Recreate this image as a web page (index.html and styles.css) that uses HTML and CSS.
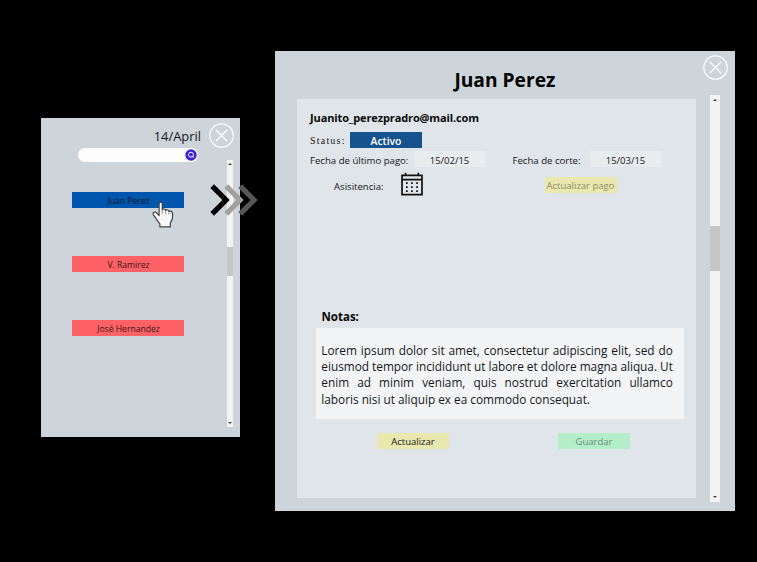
FILE: index.html
```html
<!DOCTYPE html>
<html lang="es">
<head>
<meta charset="utf-8">
<title>Juan Perez</title>
<link rel="stylesheet" href="styles.css">
</head>
<body>
<main class="stage">
  <section class="list-panel">
    <div class="list-main">
      <h2 class="date">14/April</h2>
      <div class="search">
        <svg class="search-icon" viewBox="0 0 12 12"><circle cx="6" cy="6" r="5.7" fill="#3b20d6"/><circle cx="6" cy="5.7" r="2.5" fill="none" stroke="#fff" stroke-width="1"/><path d="M7 6.8 9 8.8" stroke="#fff" stroke-width="1"/></svg>
      </div>
      <div class="people">
        <button class="person selected">Juan Perez</button>
        <button class="person">V. Ramirez</button>
        <button class="person">José Hernandez</button>
      </div>
    </div>
    <div class="list-side">
      <svg class="close" viewBox="0 0 25 25"><circle cx="12.5" cy="12.5" r="11.7"/><path d="m6.8 6.8 11.4 11.4m0-11.4L6.8 18.2"/></svg>
      <div class="scrollbar small"><i class="up"></i><i class="thumb"></i><i class="down"></i></div>
    </div>
    <svg class="pointer" viewBox="0 0 22 27"><path d="M7.1 13.4V3.1Q7.1 1.2 8.7 1.2T10.3 3.1V8.8Q10.7 7.8 12.1 8T13.6 9.4Q14.2 8.6 15.6 9T16.9 10.4Q18 9.7 19.3 10.4T20.6 12.7C21 17 20.4 19.4 18.3 22V25.9H7.9V23.1L4.4 18.2 1.3 13.6Q.6 12 2 11.3 3.2 10.7 4.6 11.8L7.1 14.6Z" fill="#f8f8f8" stroke="#444" stroke-width="1.2" stroke-linejoin="round"/><path d="M10.3 8.8v4M13.6 9.4v3.5M16.9 10.4v3" fill="none" stroke="#777" stroke-width=".8"/></svg>
    <svg class="arrows" viewBox="0 0 48 32"><path d="M30.2 2.2 44 16 30.2 29.8" stroke="#555"/><path d="M16.2 2.2 30 16 16.2 29.8" stroke="#a0a0a0"/><path d="M2.2 2.2 16 16 2.2 29.8" stroke="#000"/></svg>
  </section>

  <section class="detail-panel">
    <div class="detail-main">
      <h1 class="name">Juan Perez</h1>
      <div class="card">
        <p class="email">Juanito_perezpradro@mail.com</p>
        <div class="row status-row"><span class="status-label">Status:</span><span class="badge active">Activo</span></div>
        <div class="row date-row">
          <span class="label paid">Fecha de último pago:</span><span class="badge value">15/02/15</span>
          <span class="label due">Fecha de corte:</span><span class="badge value">15/03/15</span>
        </div>
        <div class="row attend-row">
          <span class="label attend">Asisitencia:</span>
          <svg class="calendar" viewBox="0 0 22 24"><path d="M1 3.4H21V22.6H1ZM1 7.7H21" fill="none" stroke="#111" stroke-width="1.7"/><path d="M4.6.8v3M17.4.8v3" stroke="#111" stroke-width="1.6"/><path d="M5 11.2H17.5M5 15.2H17.5M5 19.2H17.5" stroke="#111" stroke-width="1.7" stroke-dasharray="1.7 3.4"/></svg>
          <button class="badge yellow faded">Actualizar pago</button>
        </div>
        <h3 class="notes-title">Notas:</h3>
        <div class="notes">
          <div>Lorem ipsum dolor sit amet, consectetur adipiscing elit, sed do</div>
          <div>eiusmod tempor incididunt ut labore et dolore magna aliqua. Ut</div>
          <div>enim ad minim veniam, quis nostrud exercitation ullamco</div>
          <div class="last">laboris nisi ut aliquip ex ea commodo consequat.</div>
        </div>
        <div class="actions"><button class="badge yellow">Actualizar</button><button class="badge green">Guardar</button></div>
      </div>
    </div>
    <div class="detail-side">
      <svg class="close" viewBox="0 0 25 25"><circle cx="12.5" cy="12.5" r="11.7"/><path d="m6.8 6.8 11.4 11.4m0-11.4L6.8 18.2"/></svg>
      <div class="scrollbar large"><i class="up"></i><i class="thumb"></i><i class="down"></i></div>
    </div>
  </section>
</main>
</body>
</html>
```
FILE: styles.css
```css
* { box-sizing: border-box; }
body { margin: 0; background: #000; color: #151719; font-family: "Open Sans", "Noto Sans", sans-serif; }
h1, h2, h3, p { margin: 0; }
button { border: 0; padding: 0; margin: 0; font: inherit; color: inherit; }
svg { display: block; flex: none; }
.stage { width: 757px; height: 562px; padding: 51px 22.5px 0 41px; display: flex; align-items: flex-start; gap: 35px; overflow: hidden; }

.list-panel { position: relative; flex: none; width: 198.5px; height: 319px; margin-top: 67px; display: flex; background: #cdd4da; }
.list-main { width: 167.5px; padding-top: 8px; }
.date { height: 22px; padding-right: 7.5px; text-align: right; font-size: 12.9px; line-height: 20px; font-weight: 400; white-space: nowrap; }
.search { width: 120px; height: 14px; margin-left: 37px; padding-right: 1px; display: flex; align-items: center; justify-content: flex-end; border-radius: 7px; background: #fdfdfd; }
.search-icon { width: 12px; height: 12px; }
.people { margin: 30px 0 0 31px; display: flex; flex-direction: column; gap: 48px; }
.person { width: 112px; height: 16px; padding-left: 1px; background: #ff6166; font-size: 8.6px; line-height: 18px; text-align: center; color: #35161a; }
.person.selected { background: #0055ad; color: #08152b; }
.list-side { padding-top: 5px; }
.close { width: 25px; height: 25px; fill: none; stroke: #fafcfd; stroke-width: 1.3; }
.pointer { position: absolute; left: 110.5px; top: 83px; width: 22px; height: 27px; }
.arrows { position: absolute; left: 168.5px; top: 66px; width: 48px; height: 32px; fill: none; stroke-width: 5.2; }

.scrollbar { display: flex; flex-direction: column; align-items: center; background: #f3f3f3; }
.scrollbar i { flex: none; }
.up, .down { border: 2.5px solid transparent; width: 0; height: 0; }
.up { border-top: 0; border-bottom-color: #444; }
.down { border-bottom: 0; border-top-color: #444; margin-top: auto; }
.thumb { background: #c6c6c6; width: 100%; }
.small { width: 6px; height: 267px; margin: 12px 0 0 18px; padding: 3px 0; }
.small .up, .small .down { border-left-width: 2px; border-right-width: 2px; }
.small .up { border-bottom-width: 2px; }
.small .down { border-top-width: 2px; }
.small .thumb { height: 29px; margin-top: 82px; }
.large { width: 10px; height: 407px; margin: 15px 0 0 7.5px; padding: 4px 0; }
.large .thumb { height: 45px; margin-top: 125px; }

.detail-panel { flex: none; width: 460px; height: 460px; display: flex; background: #cdd4da; }
.detail-main { width: 428.5px; padding-left: 22.5px; }
.name { height: 48px; padding: 15px 0 0 157.4px; font-size: 19.2px; line-height: 28px; font-weight: 700; color: #000; white-space: nowrap; }
.card { width: 399.4px; height: 399px; padding: 11px 0 0 13px; background: #e0e5e9; }
.email { height: 22px; font-size: 11px; line-height: 16px; font-weight: 700; color: #080808; letter-spacing: -.12px; white-space: nowrap; }
.row { display: flex; align-items: center; white-space: nowrap; }
.status-row { height: 16px; }
.status-label { width: 40px; font: 10px/17px "Liberation Serif", serif; letter-spacing: 1.2px; }
.badge { flex: none; display: block; width: 72px; height: 16px; font-size: 9.5px; line-height: 16px; text-align: center; white-space: nowrap; }
.active { background: #15528e; color: #fff; font-size: 10.4px; font-weight: 600; line-height: 18px; }
.date-row { height: 18px; margin-top: 3px; }
.label { font-size: 9.6px; line-height: 18px; }
.value { background: #e9ecef; line-height: 19px; }
.date-row .badge { margin-top: -2px; }
.date-row .label { padding-top: 2px; }
.paid { width: 103.5px; }
.due { width: 77px; margin-left: 27px; }
.attend-row { height: 28px; align-items: flex-start; padding-top: 3px; }
.attend { width: 66.5px; margin: 6px 0 0 24px; }
.calendar { width: 22px; height: 24px; }
.yellow { background: #e9e8ae; }
.faded { color: #8d8d6b; margin: 5px 0 0 122px; line-height: 17px; }
.notes-title { margin: 111px 0 0 11.5px; font-size: 11.5px; line-height: 18px; height: 17px; font-weight: 700; color: #080808; }
.notes { width: 367.5px; height: 91px; margin: 3px 0 0 6.3px; padding: 13.5px 11px 0 5px; background: #f2f4f6; font-size: 11.8px; line-height: 16.4px; }
.notes div { text-align: justify; text-align-last: justify; white-space: nowrap; }
.notes .last { text-align-last: left; }
.actions { display: flex; gap: 109px; margin: 14px 0 0 67px; }
.actions .badge { line-height: 17px; }
.green { background: #b4edca; color: #658d77; }
.detail-side { padding-top: 4px; width: 31px; margin-left: -.5px; }
```
